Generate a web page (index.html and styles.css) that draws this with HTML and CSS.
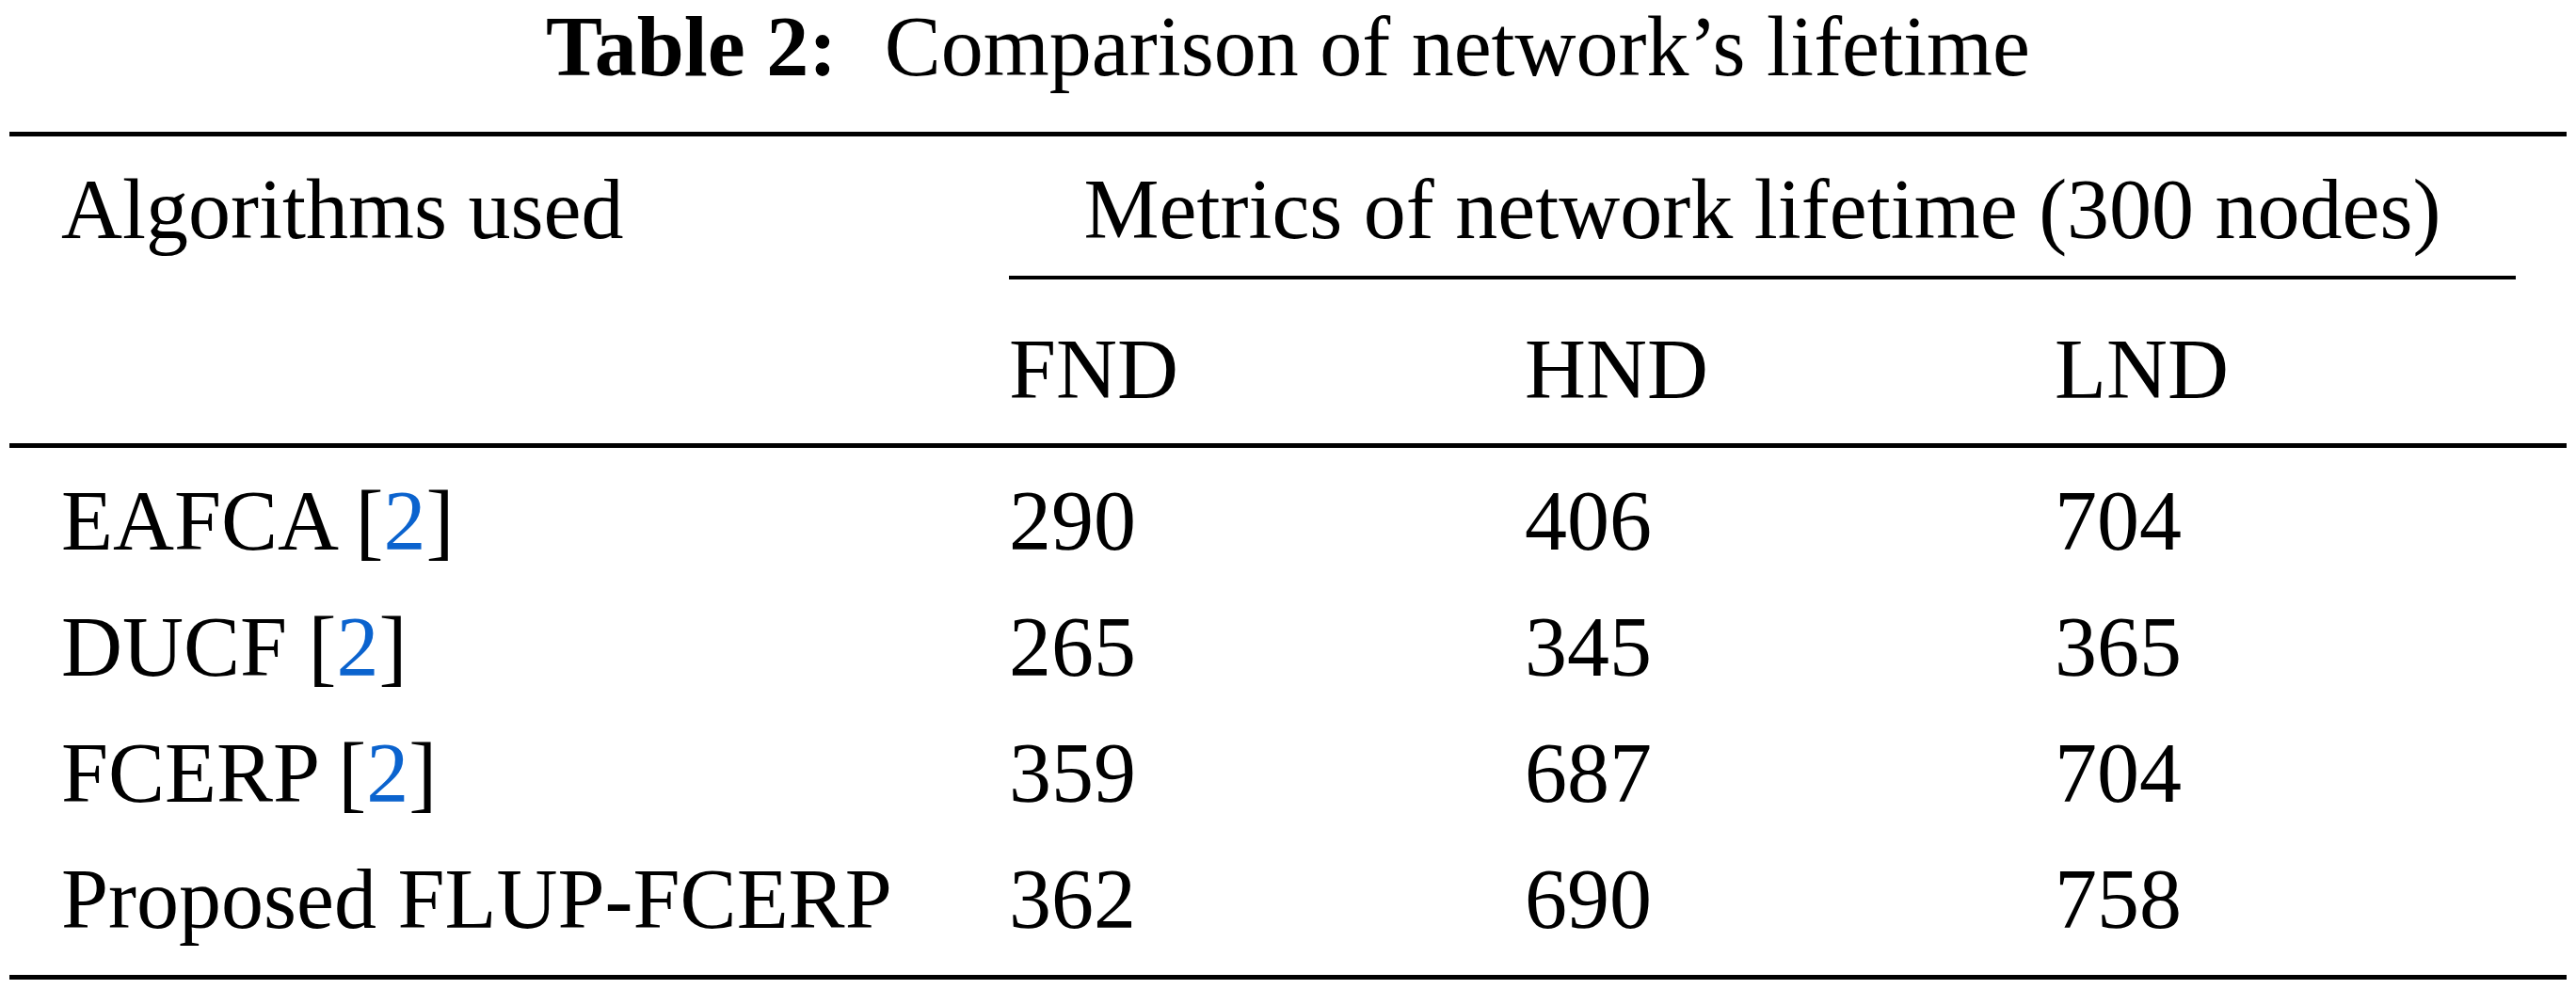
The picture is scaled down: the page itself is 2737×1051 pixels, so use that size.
FILE: index.html
```html
<!DOCTYPE html>
<html lang="en">
<head>
    <meta charset="UTF-8">
    <meta name="viewport" content="width=device-width, initial-scale=1.0">
    <link rel="stylesheet" href="styles.css">
    <title>Table 2: Comparison of network's lifetime</title>
</head>
<body>

<div class="page">
    <div class="caption"><span class="caption-label">Table 2:</span> Comparison of network’s lifetime</div>

    <div class="table">
        <div class="head">
            <div class="cell">Algorithms used</div>
            <div class="cell group">Metrics of network lifetime (300 nodes)</div>
            <div class="cmidrule"></div>
            <div class="cell sub"></div>
            <div class="cell sub">FND</div>
            <div class="cell sub">HND</div>
            <div class="cell sub">LND</div>
        </div>

        <div class="body">
            <div class="cell">EAFCA [<a class="cite" href="#ref2">2</a>]</div>
            <div class="cell">290</div>
            <div class="cell">406</div>
            <div class="cell">704</div>

            <div class="cell">DUCF [<a class="cite" href="#ref2">2</a>]</div>
            <div class="cell">265</div>
            <div class="cell">345</div>
            <div class="cell">365</div>

            <div class="cell">FCERP [<a class="cite" href="#ref2">2</a>]</div>
            <div class="cell">359</div>
            <div class="cell">687</div>
            <div class="cell">704</div>

            <div class="cell">Proposed FLUP-FCERP</div>
            <div class="cell">362</div>
            <div class="cell">690</div>
            <div class="cell">758</div>
        </div>
    </div>
</div>

</body>
</html>
```

FILE: styles.css
```css
body {
    margin: 0;
    background-color: #fff;
    color: #000;
    font-family: "Liberation Serif", "Times New Roman", serif;
    font-size: 90px;
}

.page {
    width: 2717px;
    margin-left: 10px;
}

/* Caption */
.caption {
    text-align: center;
    line-height: 100px;
    height: 100px;
    margin-bottom: 40px;
    white-space: nowrap;
}

.caption-label {
    font-weight: bold;
    margin-right: 28px;
}

/* Table with booktabs-like rules */
.table {
    border-top: 5px solid #000;
    border-bottom: 5px solid #000;
}

.head,
.body {
    display: grid;
    grid-template-columns: 1007px 548px 563px 490px;
    padding: 0 54px 0 55px;
    line-height: 134px;
}

.head {
    padding-top: 11px;
    border-bottom: 5px solid #000;
    padding-bottom: 11px;
}

.cell {
    white-space: nowrap;
}

.group {
    grid-column: 2 / 5;
    text-align: center;
}

.cmidrule {
    grid-column: 2 / 5;
    height: 4px;
    margin-top: 3px;
    background-color: #000;
}

.sub {
    margin-top: 29px;
}

.body {
    padding-top: 11px;
    padding-bottom: 13px;
}

.cite {
    color: #0b63ce;
    text-decoration: none;
}
```
